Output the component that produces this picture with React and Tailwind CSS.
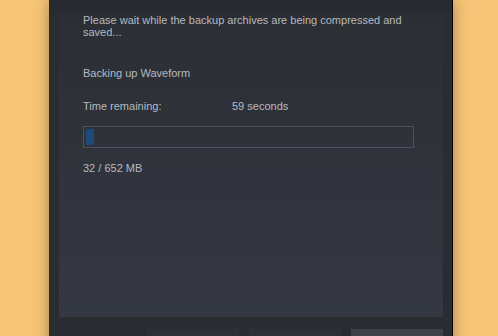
export default function App() {
  return (
    <div className="h-[336px] w-[498px] overflow-hidden bg-[#f7c577] font-['Liberation_Sans',Arial,sans-serif]">
      {/* Dialog */}
      <div className="ml-[49px] flex h-[360px] w-[404px] flex-col border-r border-black bg-[#292c31] shadow-[0_0_14px_rgba(0,0,0,0.35)]">
        {/* title strip, cut off */}
        <div className="h-3 shrink-0 bg-[#272a2f]" />

        {/* Content panel */}
        <div className="ml-[10px] mr-[9px] flex h-[305px] shrink-0 flex-col bg-gradient-to-b from-[#2b2e33] to-[#343843] px-6 pt-[2px] text-[11px] leading-[12px] text-[#b6bac0]">
          <p>Please wait while the backup archives are being compressed and saved...</p>

          <p className="mt-[29px]">Backing up Waveform</p>

          <div className="mt-[21px] flex">
            <span className="w-[149px]">Time remaining:</span>
            <span>59 seconds</span>
          </div>

          <div className="mt-[14px] h-[22px] w-[331px] border border-[#4a5162] p-[2px]">
            <div className="h-full w-[8px] bg-[#1c4a7b]" />
          </div>

          <p className="mt-[14px]">32 / 652 MB</p>
        </div>

        {/* Buttons */}
        <div className="mr-[9px] mt-3 flex justify-end gap-[10px]">
          <button className="h-6 w-[92px] bg-[#2d3035]" />
          <button className="h-6 w-[92px] bg-[#2d3035]" />
          <button className="h-6 w-[92px] bg-[#3d424b]" />
        </div>
      </div>
    </div>
  );
}
